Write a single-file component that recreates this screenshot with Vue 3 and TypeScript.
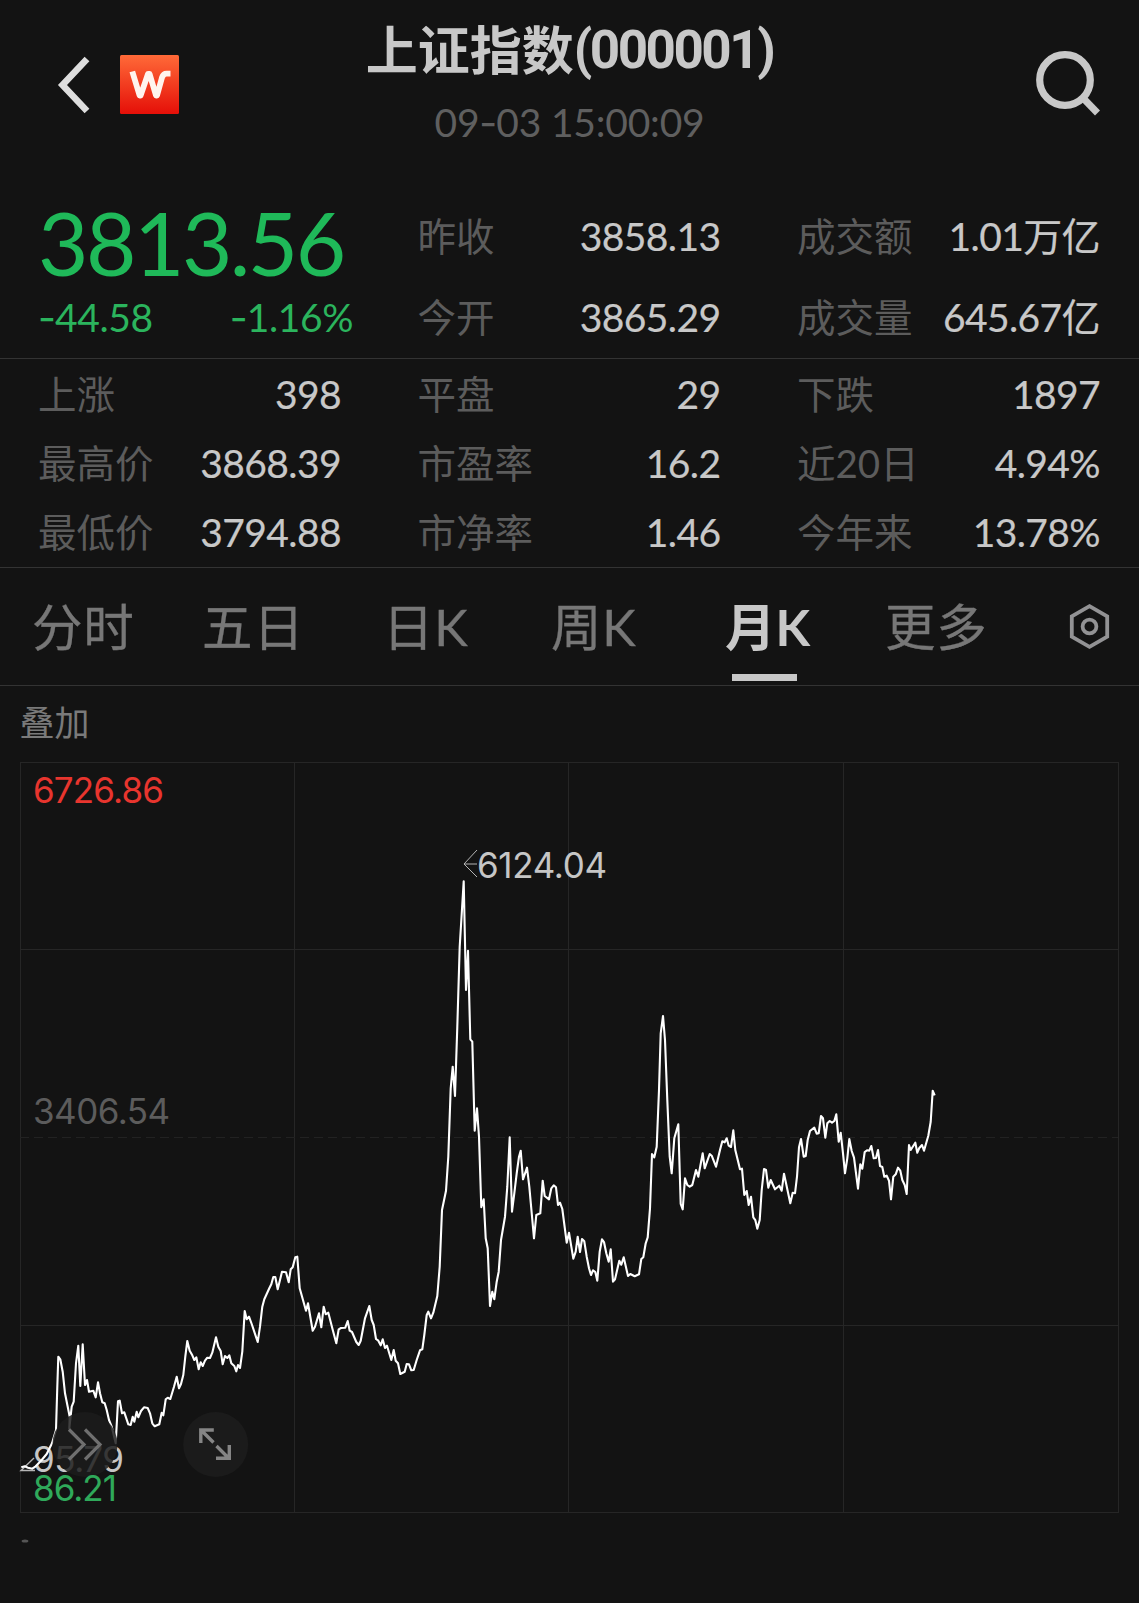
<script setup lang="ts">
interface Stat {
  label: string
  value: string
}

interface Segment {
  x: number
  y: number
  points: string
}

const headline: Stat[][] = [
  [
    { label: '昨收', value: '3858.13' },
    { label: '今开', value: '3865.29' },
  ],
  [
    { label: '成交额', value: '1.01万亿' },
    { label: '成交量', value: '645.67亿' },
  ],
]

const details: Stat[] = [
  { label: '上涨', value: '398' },
  { label: '平盘', value: '29' },
  { label: '下跌', value: '1897' },
  { label: '最高价', value: '3868.39' },
  { label: '市盈率', value: '16.2' },
  { label: '近20日', value: '4.94%' },
  { label: '最低价', value: '3794.88' },
  { label: '市净率', value: '1.46' },
  { label: '今年来', value: '13.78%' },
]

const tabs: string[] = ['分时', '五日', '日K', '周K', '月K', '更多']
const activeTab = '月K'

// Monthly closes, stored in thirds of a pixel from each segment's origin.
const segments: Segment[] = [
  {
    x: 0,
    y: 1230,
    points:
      '64,712 74,709 84,713 97,716 107,709 125,690 140,672 156,640 168,600 172,470 175,380 181,388 188,425 195,490 203,530 209,560 208,596 215,530 221,515 228,400 235,347 241,468 248,343 255,465 261,450 267,485 280,482 287,502 294,457 300,490 307,517 314,520 320,540 327,570 335,590 347,640 354,514 359,512 366,550 373,547 385,583 392,585 398,560 403,575 410,545 415,562 423,543 432,532 443,534 450,550 457,580 464,589 478,583 485,548 490,556 497,508 503,503 511,507 522,470 530,440 537,475 543,462 550,435 556,380 562,333 569,362 577,376 583,390 589,382 596,418 602,397 608,408 615,392 622,383 630,384 637,368 648,322 655,350 662,363 668,403 675,378 682,384 688,376 694,400 703,408 709,424 714,405 720,414 727,365 734,243 740,268 747,260 755,282 773,336 780,290 787,230 793,208 808,175 814,163 820,141 826,141 833,178 840,150 846,125 858,127 866,157 872,118 878,112 886,82 892,80',
  },
  {
    x: 220,
    y: 1220,
    points:
      '239,205 258,272 264,250 271,290 278,332 285,320 297,280 304,322 311,260 317,283 325,278 337,325 349,370 356,328 363,324 376,323 383,303 389,332 396,336 409,366 416,375 422,362 435,295 448,258 455,300 461,315 468,357 475,362 482,376 488,358 495,384 501,377 514,420 521,390 527,422 534,430 541,462 554,455 560,432 567,433 574,451 581,450 590,420 600,391 607,388 613,345',
  },
  {
    x: 400,
    y: 840,
    points:
      '80,1425 85,1415 93,1435 100,1418 112,1368 119,1280 126,1110 138,1052 145,950 152,745 158,680 165,768 172,560 179,320 191,124 198,450 204,332 211,598 217,605 224,872 231,805 237,890 244,1102 251,1078 257,1195 263,1225 270,1398 277,1355 283,1378 290,1325 296,1295 303,1200 315,1130 322,1040 329,892 336,1115 343,1060 350,1000 357,950 362,932 369,1018 381,983 388,1040 402,1195 409,1125 421,1120 428,1022 434,1068 447,1078 454,1045 461,1036 468,1042 474,1095 480,1088 487,1107 500,1208 507,1178 520,1256 527,1235 533,1190 540,1236 546,1197 553,1204 560,1250 567,1285 573,1305 579,1291 586,1296 592,1322 599,1235 606,1198 612,1206 619,1240 626,1265 632,1228 639,1325 645,1318 658,1262 664,1274 671,1252 684,1308 691,1302',
  },
  {
    x: 540,
    y: 1000,
    points:
      '284,829 297,823 304,777 310,772 317,730 323,712 330,625 336,462 343,472 350,440 357,270 362,100 369,48 375,120 382,300 389,470 395,520 403,415 415,373 422,612',
  },
  {
    x: 660,
    y: 1070,
    points:
      '68,418 75,325 82,345 89,350 97,345 108,300 115,320 128,250 134,295 149,252 155,257 168,290 180,240 187,214 194,217 200,205 206,227 213,231 220,181 226,240 240,298 246,296 253,375 260,363 266,405 273,380 280,442 286,450 292,476 299,450 305,360 312,297 318,300 325,353 332,330 345,358 358,347 365,362 372,311 391,400 398,368 405,370 411,320 417,232 423,207 431,260 437,258 443,210 450,183 463,173 470,191 476,190 483,138 489,145 496,203 502,160 509,153 516,158 523,153 529,133 536,215 542,188 549,250 555,310 562,265 568,207 575,243 582,263 594,356 601,283 607,296 614,246 621,241 628,242 634,228 641,265 648,264 654,240 660,288 667,291 673,320 680,317 687,332 693,388 700,320 707,313 714,293 721,302 727,330 734,345 740,372 747,225 752,240 766,218 772,248 778,234 786,225 792,242 805,197 812,155 818,62 824,76',
  },
]

const priceLine: string = segments
  .flatMap((s) =>
    s.points.split(' ').map((pair) => {
      const [px, py] = pair.split(',').map(Number)
      return `${(s.x + px / 3).toFixed(1)},${(s.y + py / 3).toFixed(1)}`
    }),
  )
  .join(' ')
</script>

<template>
  <main class="page">
    <header class="header">
      <div class="header-left">
        <svg class="back" width="40" height="64" viewBox="0 0 40 64">
          <path d="M33 6 L8.5 32 L33 58" fill="none" stroke="#dedede" stroke-width="6.6" />
        </svg>
        <svg class="logo" width="59" height="59" viewBox="0 0 59 59">
          <defs>
            <linearGradient id="logoFill" x1="0" y1="0" x2="0" y2="1">
              <stop offset="0" stop-color="#ff6a38" />
              <stop offset="1" stop-color="#e50f08" />
            </linearGradient>
          </defs>
          <rect width="59" height="59" rx="1.5" fill="url(#logoFill)" />
          <path
            d="M12.3 16.5 L19.6 40.5 H20.6 L28 19 H29.6 L36 40.5 H37 L42 22.5 Q43.3 18.6 46.5 18.6 H50.5"
            fill="none"
            stroke="#fff4ee"
            stroke-width="5.8"
            stroke-linejoin="round"
          />
        </svg>
      </div>
      <div class="header-center">
        <h1 class="title"><span>上证指数</span><span class="code">(000001)</span></h1>
        <div class="time">09<span class="sign">-</span>03 15:00:09</div>
      </div>
      <svg class="search" width="68" height="68" viewBox="0 0 68 68">
        <circle cx="31" cy="31" r="25.3" fill="none" stroke="#c8c8c8" stroke-width="7.2" />
        <path d="M48 48 L63.5 64" stroke="#c8c8c8" stroke-width="7" />
      </svg>
    </header>

    <section class="quote">
      <div class="price-block">
        <div class="price">3813.56</div>
        <div class="change">
          <span><span class="sign">-</span>44.58</span>
          <span><span class="sign">-</span>1.16%</span>
        </div>
      </div>
      <div v-for="(column, i) in headline" :key="i" class="stat-column">
        <div v-for="item in column" :key="item.label" class="stat">
          <span class="label">{{ item.label }}</span>
          <span class="value">{{ item.value }}</span>
        </div>
      </div>
    </section>

    <section class="details">
      <div v-for="item in details" :key="item.label" class="stat">
        <span class="label">{{ item.label }}</span>
        <span class="value">{{ item.value }}</span>
      </div>
    </section>

    <nav class="tabs">
      <div v-for="tab in tabs" :key="tab" class="tab" :class="{ active: tab === activeTab }">{{ tab }}</div>
      <svg class="settings" width="42" height="48" viewBox="0 0 42 48">
        <path d="M21.5 3.2 L39.2 13.4 V33.6 L21.5 43.8 L3.8 33.6 V13.4 Z" fill="none" stroke="#929294" stroke-width="3.8" />
        <circle cx="21.5" cy="23.5" r="6.9" fill="none" stroke="#929294" stroke-width="3.8" />
      </svg>
    </nav>

    <div class="overlay-row">叠加</div>

    <svg class="chart" width="1139" height="844" viewBox="0 759 1139 844">
      <g fill="none" stroke="#262626" stroke-width="1">
        <rect x="20.5" y="762.5" width="1098" height="750" />
        <path d="M20 949.5 H1118 M20 1325.5 H1118 M294.5 762 V1512 M568.5 762 V1512 M843.5 762 V1512" />
        <path d="M20 1137.5 H1118" stroke="#222" stroke-dasharray="9 5" />
      </g>

      <g class="axis">
        <text x="33" y="803" textLength="131" fill="#e8352e">6726.86</text>
        <text x="33" y="1124" textLength="137" fill="#5c5c5c">3406.54</text>
        <text x="477" y="878" textLength="130" fill="#c6c6c6">6124.04</text>
        <text x="33" y="1471.5" textLength="91" fill="#c6c6c6">95.79</text>
      </g>

      <path d="M477 850 L464 864 L477 877 M464 864 H477" fill="none" stroke="#b5b5b5" stroke-width="1" />
      <path d="M34 1458 L21 1470.5 H35" fill="none" stroke="#b5b5b5" stroke-width="1.4" />

      <polyline :points="priceLine" fill="none" stroke="#ffffff" stroke-width="2.1" stroke-linejoin="round" />

      <circle cx="85" cy="1444.5" r="32.5" fill="#1b1b1b" fill-opacity="0.84" />
      <path d="M69 1429.5 L84 1444.5 L69 1459.5 M85 1429.5 L100 1444.5 L85 1459.5" fill="none" stroke="#6f6f6f" stroke-width="3.2" />

      <circle cx="215.7" cy="1444.5" r="32.5" fill="#1b1b1b" />
      <path
        d="M213.5 1442.5 L201 1430 M200.8 1443 V1430 H213.8 M216.5 1446 L229 1458.5 M229.3 1445 V1458.3 H216"
        fill="none"
        stroke="#858585"
        stroke-width="3.4"
      />

      <g class="axis">
        <text x="33" y="1500.5" textLength="84" fill="#2fa95a">86.21</text>
      </g>
      <ellipse cx="25" cy="1541" rx="3.4" ry="1.6" fill="#555" />
    </svg>
  </main>
</template>

<style>
body {
  background: #131313;
}
</style>

<style scoped>
.page {
  width: 1139px;
  height: 1603px;
  overflow: hidden;
  background: #131313;
  color: #c8c8c8;
  font-family: Lato, "Noto Sans CJK SC", sans-serif;
  font-variant-ligatures: none;
}

.header {
  display: flex;
  justify-content: space-between;
  height: 195px;
}

.header-left {
  display: flex;
  align-items: flex-start;
  width: 240px;
  padding: 52.5px 0 0 54px;
  box-sizing: border-box;
}

.logo {
  margin: 2.5px 0 0 26px;
}

.header-center {
  display: flex;
  flex-direction: column;
  align-items: center;
  padding-top: 14px;
}

.title {
  display: flex;
  margin: 0;
  height: 72px;
  line-height: 72px;
  font-size: 52px;
  font-weight: 700;
}

.code {
  font-family: Roboto, sans-serif;
  font-size: 53px;
  letter-spacing: -2.5px;
}

.time {
  height: 72px;
  line-height: 72px;
  font-size: 39px;
  letter-spacing: -0.2px;
  color: #5f5f5f;
}

.sign {
  font-family: Inter, sans-serif;
  letter-spacing: -1px;
}

.search {
  margin: 49px 5px 0 0;
  padding-left: 135px;
  padding-right: 32px;
}

.quote,
.details {
  display: grid;
  grid-template-columns: repeat(3, 302px);
  column-gap: 77.5px;
  padding: 0 39px;
  border-bottom: 1px solid #333;
}

.quote {
  height: 163px;
}

.details {
  height: 208px;
  grid-template-rows: repeat(3, 1fr);
}

.price {
  height: 95px;
  line-height: 96px;
  margin-left: -1px;
  font-size: 87px;
  letter-spacing: -2.5px;
  color: #1fb959;
}

.change {
  display: flex;
  justify-content: space-between;
  width: 315px;
  height: 54px;
  line-height: 54px;
  margin-left: -1px;
  font-size: 39px;
  letter-spacing: -0.4px;
  color: #2bb45d;
}

.stat-column {
  display: grid;
  grid-template-rows: 81px 81px;
}

.stat {
  display: flex;
  align-items: center;
  justify-content: space-between;
  line-height: 60px;
  font-size: 39px;
  white-space: nowrap;
}

.label {
  margin-left: -1px;
  font-size: 38.5px;
  color: #5c5c5c;
}

.value {
  color: #c8c8c8;
  letter-spacing: -0.6px;
  -webkit-text-stroke: 0.2px #c8c8c8;
}

.tabs {
  display: grid;
  grid-template-columns: 170px 181px 168px 173px 161px 182px 42px;
  align-items: center;
  height: 117px;
  padding-left: 33px;
  border-bottom: 1px solid #333;
  font-size: 50.5px;
  color: #777;
}

.tab {
  position: relative;
  height: 117px;
  line-height: 117px;
  margin-left: -1px;
  letter-spacing: 0.8px;
  -webkit-text-stroke: 0.3px currentColor;
}

.active {
  margin-left: 0;
  color: #c8c8c8;
  font-weight: 700;
  letter-spacing: 0;
  -webkit-text-stroke: 0;
}

.active::after {
  content: "";
  position: absolute;
  left: 7px;
  bottom: 4px;
  width: 65px;
  height: 7px;
  background: #c8c8c8;
}

.overlay-row {
  height: 73px;
  line-height: 73px;
  padding-left: 19.5px;
  font-size: 35px;
  color: #7a7a7a;
}

.chart {
  display: block;
}

.axis {
  font-family: Inter, sans-serif;
  font-size: 35px;
}
</style>
